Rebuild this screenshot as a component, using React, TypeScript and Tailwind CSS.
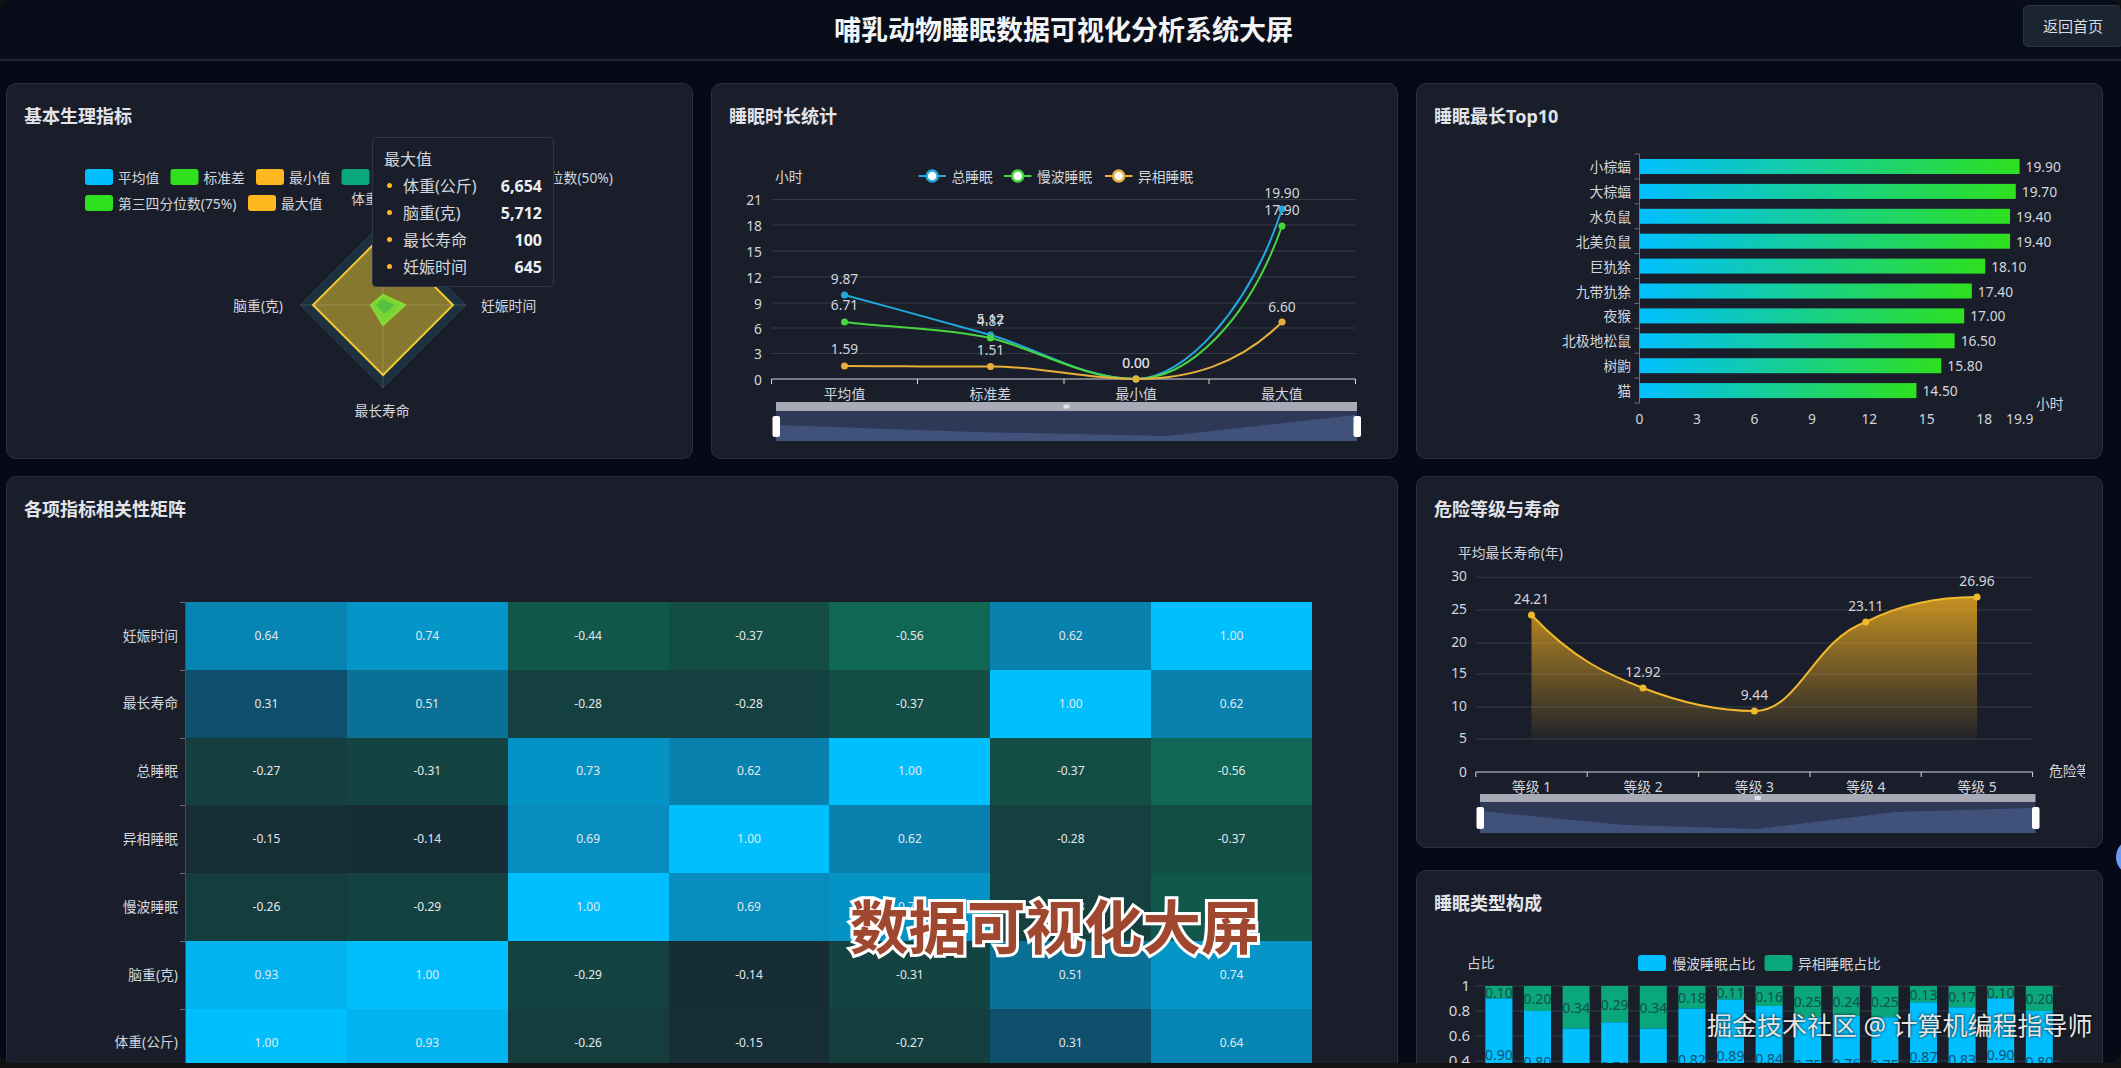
import { ReactNode } from 'react'

const font = 13.8

interface LabelProps {
  x: number
  y: number
  children: ReactNode
  anchor?: 'start' | 'middle' | 'end'
  size?: number
  className?: string
}

function Label({ x, y, children, anchor = 'start', size = font, className = 'fill-[#d3d6dd]' }: LabelProps) {
  return (
    <text x={x} y={y} textAnchor={anchor} dominantBaseline="central" fontSize={size} className={className}>
      {children}
    </text>
  )
}

function Card({ title, className, children }: { title: string; className?: string; children?: ReactNode }) {
  return (
    <section className={`relative overflow-hidden rounded-[10px] border-[1.5px] border-[#2a303e] bg-[#1a1e2a] ${className ?? ''}`}>
      <h2 className="pl-[17px] pt-[19px] text-[18px] font-bold leading-[26px] text-[#e2e4e9]">{title}</h2>
      {children}
    </section>
  )
}

// the dataZoom strip under the two line charts
function Slider({ x1, x2, top, mid, bottom, points }: { x1: number; x2: number; top: number; mid: number; bottom: number; points: string }) {
  const c = (x1 + x2) / 2
  return (
    <g>
      <rect x={x1} y={mid} width={x2 - x1} height={bottom - mid} fill="#2d3957" />
      <polygon points={`${x1},${bottom} ${points} ${x2},${bottom}`} fill="#41527a" />
      <rect x={x1} y={top} width={x2 - x1} height={mid - top} fill="#a8abb6" />
      <rect x={c - 3} y={(top + mid) / 2 - 2} width={6} height={4} fill="#dfe2e8" />
      <rect x={x1 - 3.5} y={mid + 5} width={7.5} height={bottom - mid - 5 - 4} rx={2} fill="#ffffff" />
      <rect x={x2 - 3.5} y={mid + 5} width={7.5} height={bottom - mid - 5 - 4} rx={2} fill="#ffffff" />
    </g>
  )
}

function Radar() {
  const legend = [
    { x: 85, y: 177, c: '#00bfff', t: '平均值' },
    { x: 170.5, y: 177, c: '#2ee01e', t: '标准差' },
    { x: 256, y: 177, c: '#ffb71f', t: '最小值' },
    { x: 341.5, y: 177, c: '#0aa67c', t: '第一四分位数(25%)' },
    { x: 503, y: 177, c: '#00bfff', t: '中位数(50%)' },
    { x: 85, y: 203, c: '#2ee01e', t: '第三四分位数(75%)' },
    { x: 248, y: 203, c: '#ffb71f', t: '最大值' },
  ]
  const cx = 383
  const cy = 305
  return (
    <svg viewBox="7 150 685 308" className="mt-[20.5px] block h-[308px] w-[685px]">
      {legend.map((l) => (
        <g key={l.t}>
          <rect x={l.x} y={l.y - 8} width={28} height={16} rx={3} fill={l.c} />
          <Label x={l.x + 33} y={l.y}>{l.t}</Label>
        </g>
      ))}
      <polygon points={`${cx},${cy - 83} ${cx + 83},${cy} ${cx},${cy + 83} ${cx - 83},${cy}`} fill="#1c3140" stroke="#2a3c4b" />
      <polygon points={`${cx},${cy - 70} ${cx + 70},${cy} ${cx},${cy + 70} ${cx - 70},${cy}`} fill="#86792f" stroke="#f3c731" strokeWidth={2} />
      <path d={`M${cx - 83} ${cy}H${cx + 83}M${cx} ${cy - 83}V${cy + 83}`} stroke="#ffffff" strokeOpacity={0.14} />
      <polygon points="383,295 405,305 383,325 371,305" fill="#7bd435" stroke="#86dc30" strokeWidth={2} strokeLinejoin="round" />
      <polygon points="382,299 395,305 384,314 376,305" fill="#56c13e" />
      <Label x={383} y={198} anchor="middle">体重(公斤)</Label>
      <Label x={283} y={305} anchor="end">脑重(克)</Label>
      <Label x={481} y={305}>妊娠时间</Label>
      <Label x={382} y={410} anchor="middle">最长寿命</Label>
    </svg>
  )
}

const tipRows = [
  ['体重(公斤)', '6,654'],
  ['脑重(克)', '5,712'],
  ['最长寿命', '100'],
  ['妊娠时间', '645'],
]

function RadarTooltip() {
  return (
    <div className="absolute left-[365px] top-[53px] h-[150px] w-[182px] rounded-[4px] border border-[#2f3542] bg-[#1a1e2a] px-[11px] py-[8px] text-[16px] text-[#d3d6dd]">
      <div className="leading-[26px]">最大值</div>
      <div className="flex flex-col">
        {tipRows.map(([name, value]) => (
          <div key={name} className="flex h-[27px] items-center">
            <span className="ml-[3px] mr-[11px] h-[5px] w-[5px] rounded-full bg-[#ffb71f]" />
            <span>{name}</span>
            <span className="ml-auto text-[16px] font-bold text-[#eceef2]">{value}</span>
          </div>
        ))}
      </div>
    </div>
  )
}

function SleepLines() {
  const yTicks = [[21, 199.5], [18, 225], [15, 251], [12, 277], [9, 303], [6, 328], [3, 353.5]]
  const legend = [
    { x: 919.5, c: '#22a9dc', t: '总睡眠' },
    { x: 1005, c: '#47d63f', t: '慢波睡眠' },
    { x: 1106, c: '#e8b03a', t: '异相睡眠' },
  ]
  const cats = ['平均值', '标准差', '最小值', '最大值']
  const dots = [
    { c: '#22a9dc', p: [[845.5, 295], [991.5, 335], [1137, 379], [1283, 209]] },
    { c: '#47d63f', p: [[845.5, 322], [991.5, 338], [1137, 379], [1283, 226]] },
    { c: '#e8b03a', p: [[845.5, 366], [991.5, 366.5], [1137, 379], [1283, 322]] },
  ]
  const values = [
    [845.5, 278, '9.87'], [845.5, 304, '6.71'], [845.5, 348, '1.59'],
    [991.5, 320, '4.87'], [991.5, 318, '5.12'], [991.5, 349, '1.51'],
    [1137, 362, '0.00'], [1137, 362, '0.00'],
    [1283, 192, '19.90'], [1283, 209, '17.90'], [1283, 306, '6.60'],
  ] as const
  return (
    <svg viewBox="713 150 684 308" className="mt-[20.5px] block h-[308px] w-[684px]">
      <Label x={776} y={176}>小时</Label>
      {legend.map((l) => (
        <g key={l.t}>
          <path d={`M${l.x} 176h27.5`} stroke={l.c} strokeWidth={2} />
          <circle cx={l.x + 13.7} cy={176} r={5.5} fill="#ffffff" stroke={l.c} strokeWidth={2.5} />
          <Label x={l.x + 33} y={176}>{l.t}</Label>
        </g>
      ))}
      {yTicks.map(([v, y]) => (
        <g key={v}>
          <path d={`M772.5 ${y}H1356.5`} stroke="#343a48" />
          <Label x={763} y={y} anchor="end">{v}</Label>
        </g>
      ))}
      <Label x={763} y={379} anchor="end">0</Label>
      <path d="M772.5 379H1356.5M772.5 379v5M918.5 379v5M1065 379v5M1210 379v5M1356.5 379v5" stroke="#d5d8df" fill="none" />
      {cats.map((c, i) => (
        <Label key={c} x={845.5 + i * 145.8} y={393} anchor="middle">{c}</Label>
      ))}
      <path d="M845.5 295C894 308 945 322 991.5 335C1040 349 1085 379 1137 379C1185 379 1250 310 1283 209" fill="none" stroke="#22a9dc" strokeWidth={2} />
      <path d="M845.5 322C894 328 945 328 991.5 338C1040 350 1085 379 1137 379C1190 379 1250 320 1283 226" fill="none" stroke="#47d63f" strokeWidth={2} />
      <path d="M845.5 366C894 366 945 367 991.5 366.5C1040 366 1085 379 1137 379C1190 379 1240 365 1283 322" fill="none" stroke="#e8b03a" strokeWidth={2} />
      {dots.map((s) => s.p.map(([x, y]) => <circle key={`${s.c}${x}`} cx={x} cy={y} r={3.5} fill={s.c} />))}
      {values.map(([x, y, t], i) => (
        <Label key={i} x={x} y={y} anchor="middle">{t}</Label>
      ))}
      <Slider x1={777} x2={1358} top={402} mid={411} bottom={441} points="777,425 975,432 1168,436 1356,415" />
    </svg>
  )
}

const top10: [string, number][] = [
  ['小棕蝠', 19.9], ['大棕蝠', 19.7], ['水负鼠', 19.4], ['北美负鼠', 19.4], ['巨犰狳', 18.1],
  ['九带犰狳', 17.4], ['夜猴', 17.0], ['北极地松鼠', 16.5], ['树鼩', 15.8], ['猫', 14.5],
]

function TopBars() {
  const xTicks = [0, 3, 6, 9, 12, 15, 18]
  return (
    <svg viewBox="1418 150 684 308" className="mt-[20.5px] block h-[308px] w-[684px]">
      <defs>
        <linearGradient id="barFill">
          <stop offset="0" stopColor="#00bfff" />
          <stop offset="1" stopColor="#2ee01e" />
        </linearGradient>
      </defs>
      <path d="M1640.5 154V403" stroke="#6a6f7c" />
      {Array.from({ length: 11 }, (_, i) => (
        <path key={i} d={`M1635.5 ${154 + i * 24.9}h5`} stroke="#6a6f7c" />
      ))}
      {top10.map(([name, v], i) => {
        const y = 166.5 + i * 24.9
        const w = v * 19.1
        return (
          <g key={name}>
            <Label x={1632} y={y} anchor="end">{name}</Label>
            <rect x={1640.5} y={y - 7.5} width={w} height={15} fill="url(#barFill)" />
            <Label x={1640.5 + w + 6} y={y}>{v.toFixed(2)}</Label>
          </g>
        )
      })}
      {xTicks.map((v) => (
        <Label key={v} x={1640.5 + v * 19.15} y={418} anchor="middle">{v}</Label>
      ))}
      <Label x={2020.7} y={418} anchor="middle">19.9</Label>
      <Label x={2037} y={403}>小时</Label>
    </svg>
  )
}

const heatLabels = ['妊娠时间', '最长寿命', '总睡眠', '异相睡眠', '慢波睡眠', '脑重(克)', '体重(公斤)']
const heat = [
  [0.64, 0.74, -0.44, -0.37, -0.56, 0.62, 1.0],
  [0.31, 0.51, -0.28, -0.28, -0.37, 1.0, 0.62],
  [-0.27, -0.31, 0.73, 0.62, 1.0, -0.37, -0.56],
  [-0.15, -0.14, 0.69, 1.0, 0.62, -0.28, -0.37],
  [-0.26, -0.29, 1.0, 0.69, 0.73, -0.28, -0.44],
  [0.93, 1.0, -0.29, -0.14, -0.31, 0.51, 0.74],
  [1.0, 0.93, -0.26, -0.15, -0.27, 0.31, 0.64],
]

// same blend the chart's visualMap gives: card colour towards blue or green
function heatColor(v: number) {
  const a = Math.abs(v)
  const to = v > 0 ? [0, 191, 255] : [6, 165, 115]
  const from = v > 0 ? [20, 29, 41] : [26, 25, 44]
  const mix = from.map((c, i) => Math.round(c + (to[i] - c) * a))
  return `rgb(${mix.join(',')})`
}

function Heatmap() {
  return (
    <div className="mt-[80px] flex">
      <div className="flex w-[178px] flex-col">
        {heatLabels.map((l) => (
          <div key={l} className="flex h-[67.8px] items-center justify-end text-[13.8px] text-[#d3d6dd]">
            <span className="mr-[7px]">{l}</span>
          </div>
        ))}
      </div>
      <div className="w-[1127px] border-l border-[#4a4f5c]">
        {heat.map((row, r) => (
          <div key={r} className="relative flex h-[67.8px]">
            <span className="absolute left-[-6px] top-0 h-px w-[5px] bg-[#6a6f7c]" />
            {row.map((v, c) => (
              <div
                key={c}
                className="flex flex-1 items-center justify-center text-[12px] text-[#e4e8ee]"
                style={{ backgroundColor: heatColor(v) }}
              >
                {v.toFixed(2)}
              </div>
            ))}
          </div>
        ))}
      </div>
    </div>
  )
}

function RiskLife() {
  const grid = [[30, 577.3], [25, 610], [20, 643], [15, 674], [10, 707], [5, 739]]
  const points = [
    [1532.5, 615, '24.21', 598], [1644, 688, '12.92', 671], [1755.4, 711, '9.44', 694],
    [1866.8, 622, '23.11', 605], [1978, 597, '26.96', 580],
  ] as const
  const curve = 'M1532.5 615C1575 660 1610 675 1644 688C1680 702 1715 711 1755.4 711C1800 711 1815 640 1866.8 622C1900 605 1940 597 1978 597'
  return (
    <svg viewBox="1418 530 684 316" className="mt-[7.5px] block h-[316px] w-[684px]">
      <defs>
        <linearGradient id="lifeFill" gradientUnits="userSpaceOnUse" x1="0" y1="597" x2="0" y2="745">
          <stop offset="0" stopColor="#ffb71f" stopOpacity={0.75} />
          <stop offset="1" stopColor="#ffb71f" stopOpacity={0} />
        </linearGradient>
        <clipPath id="lifeClip">
          <rect x="1418" y="530" width="668" height="316" />
        </clipPath>
      </defs>
      <Label x={1459} y={552}>平均最长寿命(年)</Label>
      {grid.map(([v, y]) => (
        <g key={v}>
          <path d={`M1476.8 ${y}H2033.6`} stroke="#343a48" />
          <Label x={1468} y={y - 2} anchor="end">{v}</Label>
        </g>
      ))}
      <Label x={1468} y={771} anchor="end">0</Label>
      <path d={`${curve}V772H1532.5Z`} fill="url(#lifeFill)" />
      <path d={curve} fill="none" stroke="#f0b92e" strokeWidth={2} />
      <path d="M1476.8 772H2033.6M1476.8 772v5M1588.2 772v5M1699.6 772v5M1811 772v5M1922.2 772v5M2033.6 772v5" stroke="#d5d8df" fill="none" />
      {points.map(([x, y, t, ly], i) => (
        <g key={t}>
          <circle cx={x} cy={y} r={3.5} fill="#f0b92e" />
          <Label x={x} y={ly} anchor="middle">{t}</Label>
          <Label x={x} y={786} anchor="middle">{`等级 ${i + 1}`}</Label>
        </g>
      ))}
      <g clipPath="url(#lifeClip)">
        <Label x={2050} y={770}>危险等级</Label>
      </g>
      <Slider x1={1481} x2={2036.5} top={794} mid={802} bottom={833} points="1481,811 1625,825 1758.6,829 1896.5,812 2036,808" />
    </svg>
  )
}

const sleepMix = [
  [0.9, 0.1], [0.8, 0.2], [0.66, 0.34], [0.71, 0.29], [0.66, 0.34], [0.82, 0.18], [0.89, 0.11], [0.84, 0.16],
  [0.75, 0.25], [0.76, 0.24], [0.75, 0.25], [0.87, 0.13], [0.83, 0.17], [0.9, 0.1], [0.8, 0.2],
]

function SleepMix() {
  return (
    <svg viewBox="1418 945 684 150" className="mt-[28.5px] block h-[150px] w-[684px]">
      <Label x={1468} y={962}>占比</Label>
      <rect x={1639} y={955} width={28} height={16} rx={3} fill="#00bfff" />
      <Label x={1673.5} y={963}>慢波睡眠占比</Label>
      <rect x={1765.5} y={955} width={28} height={16} rx={3} fill="#0aa67c" />
      <Label x={1799} y={963}>异相睡眠占比</Label>
      {[['1', 986], ['0.8', 1011], ['0.6', 1036], ['0.4', 1061]].map(([t, y]) => (
        <g key={t}>
          <path d={`M1476 ${y}H2060.7`} stroke="#343a48" />
          <Label x={1471} y={Number(y) - 1} anchor="end" size={15}>{t}</Label>
        </g>
      ))}
      {sleepMix.map(([slow, rem], i) => {
        const x = 1486.4 + i * 38.6
        const h1 = rem * 125
        const h2 = slow * 125
        return (
          <g key={i}>
            <rect x={x} y={986} width={27} height={h1} fill="#0aa67c" />
            <rect x={x} y={986 + h1} width={27} height={h2} fill="#00bfff" />
            <Label x={x + 13.5} y={986 + h1 / 2} anchor="middle" size={14} className="fill-[#15504a]">{rem.toFixed(2)}</Label>
            <Label x={x + 13.5} y={986 + h1 + h2 / 2} anchor="middle" size={14} className="fill-[#105373]">{slow.toFixed(2)}</Label>
          </g>
        )
      })}
    </svg>
  )
}

export default function App() {
  return (
    <div className="relative h-[1068px] w-[2121px] overflow-hidden bg-[#111214] [font-family:'Noto_Sans','Noto_Sans_CJK_SC',sans-serif]">
      <div className="relative h-[1063px] overflow-hidden rounded-[12px] bg-[#060a16]">
        <header className="relative flex h-[61px] items-center justify-center border-b-2 border-[#20252f] bg-[#090d19] pl-[6px]">
          <h1 className="text-[27px] font-bold leading-none text-[#f3f4f6]">哺乳动物睡眠数据可视化分析系统大屏</h1>
          <button className="absolute right-[-2px] top-[5px] h-[42px] w-[100px] rounded-[5px] border border-[#2b3441] bg-[#1b2531] text-[15px] text-[#d8dce2]">
            返回首页
          </button>
        </header>
        <main className="grid grid-cols-[687px_687px_687px] gap-x-[18px] gap-y-[17px] pl-[6px] pt-[22px]">
          <Card title="基本生理指标" className="h-[376px]">
            <Radar />
            <RadarTooltip />
          </Card>
          <Card title="睡眠时长统计" className="h-[376px]">
            <SleepLines />
          </Card>
          <Card title="睡眠最长Top10" className="h-[376px]">
            <TopBars />
          </Card>
          <Card title="各项指标相关性矩阵" className="col-span-2 h-[620px]">
            <Heatmap />
          </Card>
          <div className="flex flex-col gap-[22px]">
            <Card title="危险等级与寿命" className="h-[372px]">
              <RiskLife />
            </Card>
            <Card title="睡眠类型构成" className="h-[300px]">
              <SleepMix />
            </Card>
          </div>
        </main>
        <span className="absolute left-[850px] top-[894px] whitespace-nowrap text-[58.5px] font-bold leading-[64px] text-[#a0482f] [-webkit-text-stroke:6px_#ffffff] [paint-order:stroke_fill]">
          数据可视化大屏
        </span>
        <span className="absolute left-[1707px] top-[1008px] whitespace-nowrap text-[25px] leading-[34px] text-[#e6e6e6] [text-shadow:0_0_3px_#000]">
          掘金技术社区 @ 计算机编程指导师
        </span>
        <span className="absolute left-[2116px] top-[839px] h-[36px] w-[36px] rounded-full bg-[#6b9cf5]" />
      </div>
    </div>
  )
}
